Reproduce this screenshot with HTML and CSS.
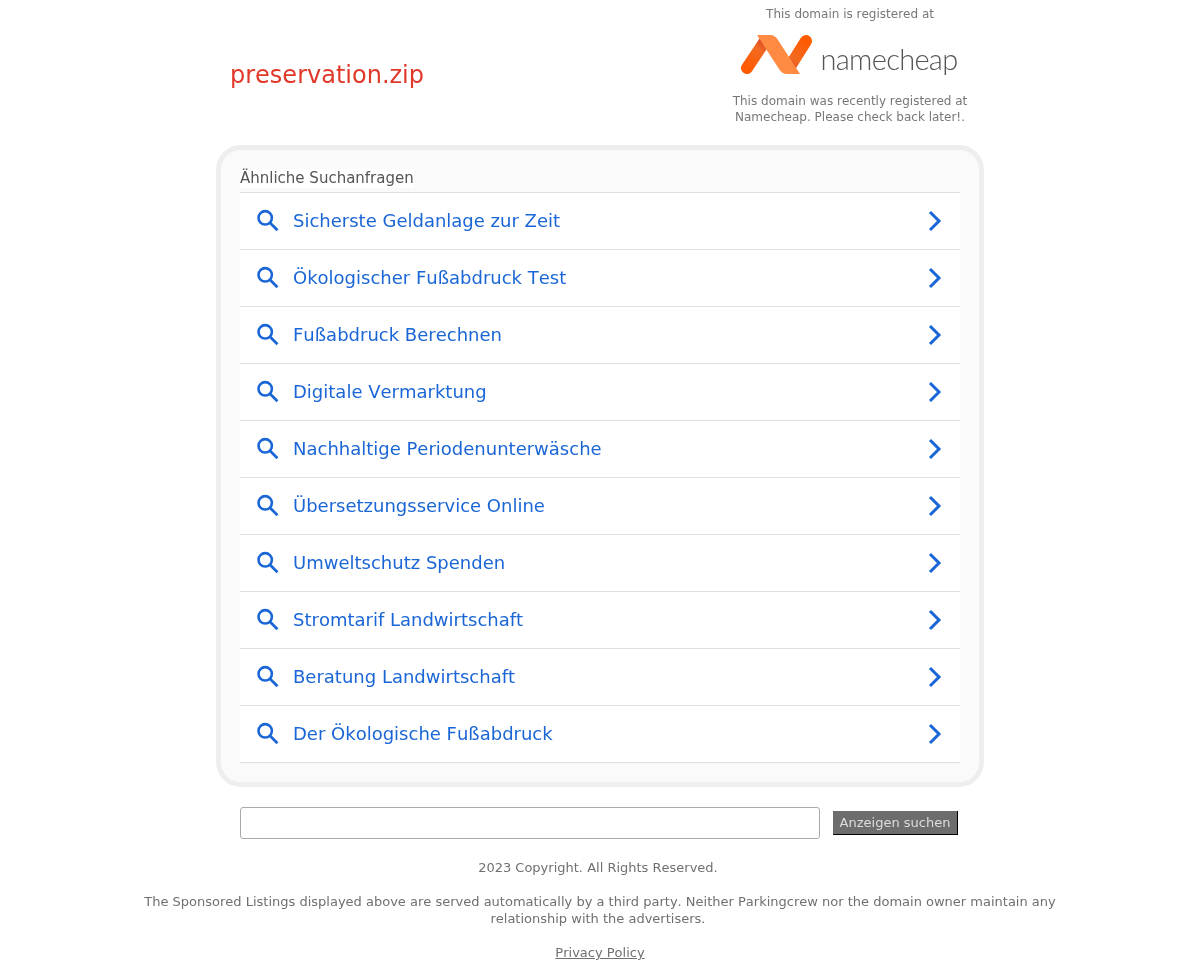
FILE: index.html
```html
<!DOCTYPE html>
<html lang="de">
<head>
  <meta charset="UTF-8" />
  <title>preservation.zip</title>
  <link rel="stylesheet" href="styles.css">
</head>
<body>
  <svg class="sprites" width="0" height="0">
    <symbol id="ico-search" viewBox="0 0 24 24">
      <circle cx="9.6" cy="9.2" r="7" fill="none" stroke="currentColor" stroke-width="2.7"/>
      <path d="M14.6 14.4l7.8 7.8" fill="none" stroke="currentColor" stroke-width="2.9"/>
    </symbol>
    <symbol id="ico-chevron" viewBox="0 0 14 22">
      <path d="M2 2l9 9-9 9" fill="none" stroke="currentColor" stroke-width="3"/>
    </symbol>
  </svg>

  <!-- Header -->
  <header class="top">
    <h1 class="domain">preservation.zip</h1>
    <div class="registrar">
      <p>This domain is registered at</p>
      <div class="logo">
        <svg class="logo-mark" width="72" height="40" viewBox="0 0 72 40">
          <defs>
            <linearGradient id="leg-l" gradientUnits="userSpaceOnUse" x1="25" y1="5" x2="6" y2="33">
              <stop offset="0" stop-color="#d6412b"/>
              <stop offset="0.35" stop-color="#f26a21"/>
              <stop offset="1" stop-color="#ff5a00"/>
            </linearGradient>
            <linearGradient id="leg-r" gradientUnits="userSpaceOnUse" x1="47" y1="35" x2="66" y2="6">
              <stop offset="0" stop-color="#d6412b"/>
              <stop offset="0.35" stop-color="#f26a21"/>
              <stop offset="1" stop-color="#ff5a00"/>
            </linearGradient>
          </defs>
          <path d="M6 33L24 6" fill="none" stroke="url(#leg-l)" stroke-width="12" stroke-linecap="round"/>
          <path d="M48 33L65 6" fill="none" stroke="url(#leg-r)" stroke-width="12" stroke-linecap="round"/>
          <path d="M16 0h13q5 0 8 5l22 34H46q-5 0-8-5z" fill="#ff8a42"/>
        </svg>
        <span class="logo-name">namecheap</span>
      </div>
      <p>This domain was recently registered at<br>Namecheap. Please check back later!.</p>
    </div>
  </header>

  <!-- Related searches -->
  <main class="box">
    <h2 class="box-title"><span>Ähnliche Suchanfragen</span></h2>
    <ul class="links">
      <li><a href="#"><svg class="ico"><use href="#ico-search"/></svg><span>Sicherste Geldanlage zur Zeit</span><svg class="arrow"><use href="#ico-chevron"/></svg></a></li>
      <li><a href="#"><svg class="ico"><use href="#ico-search"/></svg><span>Ökologischer Fußabdruck Test</span><svg class="arrow"><use href="#ico-chevron"/></svg></a></li>
      <li><a href="#"><svg class="ico"><use href="#ico-search"/></svg><span>Fußabdruck Berechnen</span><svg class="arrow"><use href="#ico-chevron"/></svg></a></li>
      <li><a href="#"><svg class="ico"><use href="#ico-search"/></svg><span>Digitale Vermarktung</span><svg class="arrow"><use href="#ico-chevron"/></svg></a></li>
      <li><a href="#"><svg class="ico"><use href="#ico-search"/></svg><span>Nachhaltige Periodenunterwäsche</span><svg class="arrow"><use href="#ico-chevron"/></svg></a></li>
      <li><a href="#"><svg class="ico"><use href="#ico-search"/></svg><span>Übersetzungsservice Online</span><svg class="arrow"><use href="#ico-chevron"/></svg></a></li>
      <li><a href="#"><svg class="ico"><use href="#ico-search"/></svg><span>Umweltschutz Spenden</span><svg class="arrow"><use href="#ico-chevron"/></svg></a></li>
      <li><a href="#"><svg class="ico"><use href="#ico-search"/></svg><span>Stromtarif Landwirtschaft</span><svg class="arrow"><use href="#ico-chevron"/></svg></a></li>
      <li><a href="#"><svg class="ico"><use href="#ico-search"/></svg><span>Beratung Landwirtschaft</span><svg class="arrow"><use href="#ico-chevron"/></svg></a></li>
      <li><a href="#"><svg class="ico"><use href="#ico-search"/></svg><span>Der Ökologische Fußabdruck</span><svg class="arrow"><use href="#ico-chevron"/></svg></a></li>
    </ul>
  </main>

  <!-- Search form -->
  <form class="search">
    <input type="text" class="search-input" />
    <button type="button" class="search-btn">Anzeigen suchen</button>
  </form>

  <!-- Footer -->
  <footer class="foot">
    <p>2023 Copyright. All Rights Reserved.&nbsp;</p>
    <p>The Sponsored Listings displayed above are served automatically by a third party. Neither Parkingcrew nor the domain owner maintain any relationship with the advertisers.&nbsp;</p>
    <p><a href="#">Privacy Policy</a></p>
  </footer>
</body>
</html>
```

FILE: styles.css
```css
/* Basic Reset */
* {
  margin: 0;
  padding: 0;
  box-sizing: border-box;
}

body {
  font-family: "DejaVu Sans", sans-serif;
  font-kerning: none;
  color: #707070;
  background: #fff;
  will-change: opacity;
}

.sprites {
  display: block;
  height: 0;
}

/* Header */
.top {
  width: 768px;
  height: 145px;
  margin: 0 auto;
  display: flex;
  justify-content: space-between;
}

.domain {
  font-size: 24px;
  font-weight: normal;
  color: #e0392a;
  margin: 60px 0 0 14px;
  line-height: 30px;
}

.registrar {
  width: 268px;
  padding-top: 6px;
  text-align: center;
  font-size: 12px;
  line-height: 16px;
  color: #777;
}

.logo {
  height: 66px;
  margin: 0 0 5px;
  padding-right: 2px;
  display: flex;
  align-items: center;
  justify-content: center;
  gap: 8px;
}

.logo-mark {
  flex: none;
  margin-top: -1px;
}

.logo-name {
  font-family: "Lato", sans-serif;
  font-weight: 300;
  font-size: 29px;
  letter-spacing: -0.7px;
  color: #555;
  position: relative;
  top: 4px;
}

/* Links box */
.box {
  width: 768px;
  height: 642px;
  margin: 0 auto;
  padding: 19px 19px 0;
  background: #fafafa;
  border: 5px solid #eee;
  border-radius: 25px;
}

.box-title {
  font-size: 15px;
  font-weight: normal;
  line-height: 19px;
  color: #555;
  height: 23px;
}

.box-title span {
  display: inline-block;
  background: #fff;
}

.links {
  list-style: none;
  background: #fff;
  border-top: 1px solid #e0e0e4;
}

.links li {
  border-bottom: 1px solid #e0e0e4;
}

.links a {
  height: 56px;
  padding: 0 18px 0 16px;
  display: flex;
  align-items: center;
  font-size: 18px;
  color: #1a66d6;
  text-decoration: none;
}

.links span {
  flex: 1;
  margin: 0 0 2px 14px;
}

.ico {
  width: 23px;
  height: 23px;
  flex: none;
  margin-bottom: 2px;
}

.arrow {
  width: 14px;
  height: 22px;
  flex: none;
}

/* Search form */
.search {
  width: 720px;
  margin: 20px auto 0;
  display: flex;
  align-items: center;
}

.search-input {
  width: 580px;
  height: 32px;
  border: 1px solid #aaa;
  border-radius: 3px;
  background: #fff;
}

.search-btn {
  width: 125px;
  height: 24px;
  margin-left: 13px;
  font-family: inherit;
  font-kerning: none;
  font-size: 13px;
  color: #ddd;
  background: #6d6d6d;
  border: none;
  border-right: 1px solid #000;
  border-bottom: 1px solid #000;
}

/* Footer */
.foot {
  width: 920px;
  margin: 20px auto 0;
  text-align: center;
  font-size: 13px;
  line-height: 17px;
  color: #707070;
}

.foot p {
  margin-bottom: 17px;
}

.foot a {
  color: #707070;
}
```
